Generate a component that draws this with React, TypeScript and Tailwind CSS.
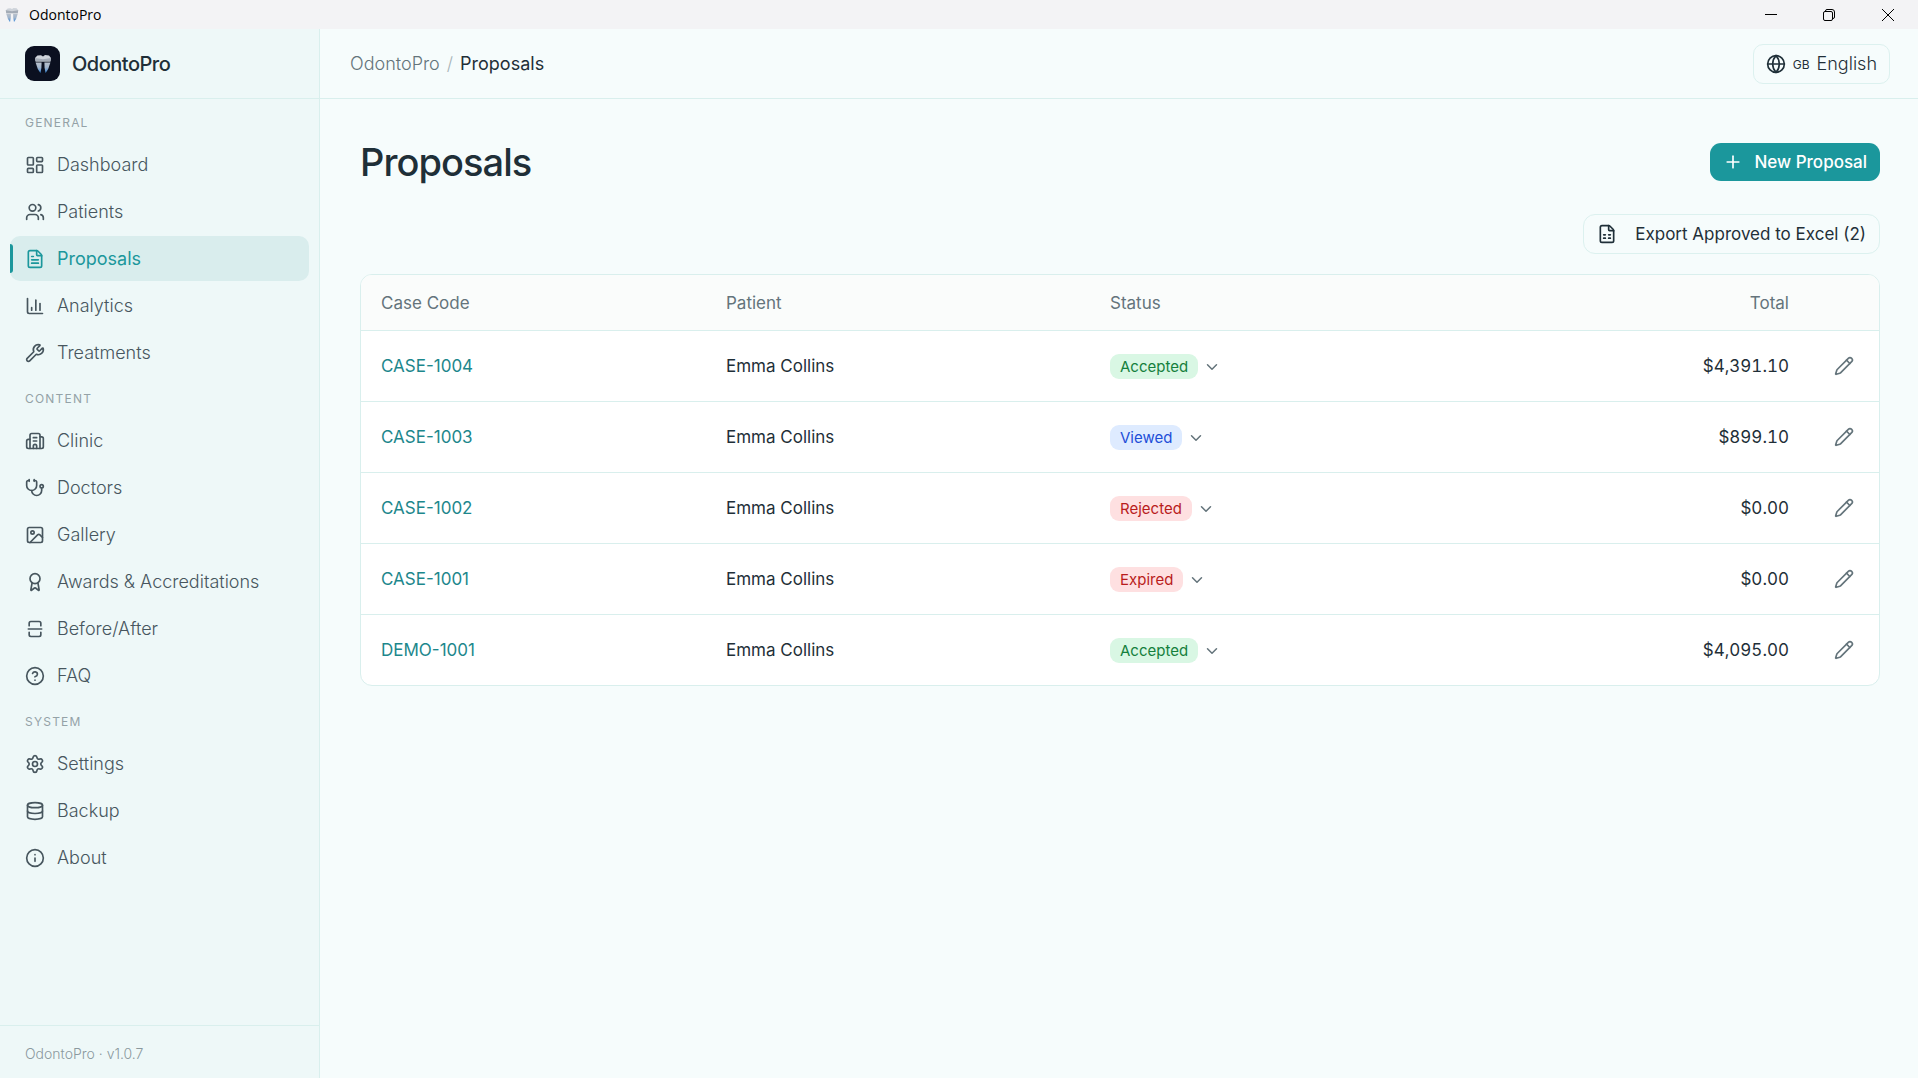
import type { ReactNode } from 'react';
import {
  Award,
  Building2,
  ChartColumn,
  ChevronDown,
  CircleHelp,
  Database,
  FileSpreadsheet,
  FileText,
  Globe,
  Image,
  Info,
  LayoutDashboard,
  Pencil,
  Plus,
  Settings,
  SquareSplitVertical,
  Stethoscope,
  Users,
  Wrench,
} from 'lucide-react';
import type { LucideIcon } from 'lucide-react';

type Status = 'Accepted' | 'Viewed' | 'Rejected' | 'Expired';

interface Proposal {
  code: string;
  patient: string;
  status: Status;
  total: string;
}

interface NavGroup {
  title: string;
  items: { label: string; icon: LucideIcon }[];
}

const navGroups: NavGroup[] = [
  {
    title: 'General',
    items: [
      { label: 'Dashboard', icon: LayoutDashboard },
      { label: 'Patients', icon: Users },
      { label: 'Proposals', icon: FileText },
      { label: 'Analytics', icon: ChartColumn },
      { label: 'Treatments', icon: Wrench },
    ],
  },
  {
    title: 'Content',
    items: [
      { label: 'Clinic', icon: Building2 },
      { label: 'Doctors', icon: Stethoscope },
      { label: 'Gallery', icon: Image },
      { label: 'Awards & Accreditations', icon: Award },
      { label: 'Before/After', icon: SquareSplitVertical },
      { label: 'FAQ', icon: CircleHelp },
    ],
  },
  {
    title: 'System',
    items: [
      { label: 'Settings', icon: Settings },
      { label: 'Backup', icon: Database },
      { label: 'About', icon: Info },
    ],
  },
];

const proposals: Proposal[] = [
  { code: 'CASE-1004', patient: 'Emma Collins', status: 'Accepted', total: '$4,391.10' },
  { code: 'CASE-1003', patient: 'Emma Collins', status: 'Viewed', total: '$899.10' },
  { code: 'CASE-1002', patient: 'Emma Collins', status: 'Rejected', total: '$0.00' },
  { code: 'CASE-1001', patient: 'Emma Collins', status: 'Expired', total: '$0.00' },
  { code: 'DEMO-1001', patient: 'Emma Collins', status: 'Accepted', total: '$4,095.00' },
];

const statusStyles: Record<Status, string> = {
  Accepted: 'bg-[#d9f7e4] text-[#15803d]',
  Viewed: 'bg-[#deebff] text-[#1d4ed8]',
  Rejected: 'bg-[#fee0e1] text-[#b91c1c]',
  Expired: 'bg-[#fee0e1] text-[#b91c1c]',
};

function ToothLogo({ className }: { className?: string }) {
  return (
    <svg viewBox="0 0 18 18" className={className} aria-hidden="true">
      <defs>
        <linearGradient id="tooth-root" x1="0" y1="0" x2="0" y2="1">
          <stop offset="0" stopColor="#b9c1cc" />
          <stop offset="0.5" stopColor="#9fb3cb" />
          <stop offset="1" stopColor="#2f83d8" />
        </linearGradient>
      </defs>
      <path d="M1 3 3.4 0.6 7 0.2 9 1.4 11 0 15 0.4 17 3 16.4 6.6H1.6Z" fill="#ced3da" />
      <path d="M1 3 9 4.2 17 3 16.4 6.6H1.6Z" fill="#a3abb6" />
      <path d="M1.6 7.4H7.6L7.4 13 6.4 18 3.8 14Z" fill="url(#tooth-root)" />
      <path d="M10.4 7.4h6L14.200 14 11.6 18 10.6 13Z" fill="url(#tooth-root)" />
    </svg>
  );
}

function TitleBar() {
  return (
    <div className="flex h-[29px] shrink-0 items-center justify-between bg-[#f3f3f5] text-black">
      <div className="flex items-center gap-[10px] pl-[5px]">
        <ToothLogo className="size-[14px]" />
        <span className="font-['Open_Sans',sans-serif] text-[14px]">OdontoPro</span>
      </div>
      <div className="flex items-center">
        <button aria-label="Minimize" className="flex h-[29px] w-[58px] items-center justify-center">
          <svg width="12" height="12" viewBox="0 0 12 12" stroke="currentColor" fill="none">
            <path d="M0 5.5h12" />
          </svg>
        </button>
        <button aria-label="Restore" className="flex h-[29px] w-[58px] items-center justify-center">
          <svg width="12" height="12" viewBox="0 0 12 12" stroke="currentColor" fill="none">
            <rect x="0.5" y="2.5" width="9" height="9" rx="1.5" />
            <path d="M2.5 2.5V2A1.5 1.5 0 0 1 4 0.5h5A2.5 2.5 0 0 1 11.5 3v5A1.5 1.5 0 0 1 10 9.5h-.5" />
          </svg>
        </button>
        <button aria-label="Close" className="flex h-[29px] w-[60px] items-center justify-center">
          <svg width="12" height="12" viewBox="0 0 12 12" stroke="currentColor" fill="none">
            <path d="M0 0l12 12M12 0 0 12" />
          </svg>
        </button>
      </div>
    </div>
  );
}

function NavItem({ label, icon: Icon, active }: { label: string; icon: LucideIcon; active: boolean }) {
  return (
    <a
      href="#"
      aria-current={active ? 'page' : undefined}
      className={`relative flex h-[45px] items-center gap-3 rounded-[10px] px-[15px] text-[18px] ${
        active ? 'bg-[#d9eded] text-[#1b979c]' : 'font-light text-[#47565e]'
      }`}
    >
      {active && <span className="absolute inset-y-2 left-0 w-[3px] rounded-r-sm bg-[#1b979c]" />}
      <Icon className="size-5" strokeWidth={2} />
      {label}
    </a>
  );
}

function Sidebar() {
  return (
    <aside className="flex w-80 shrink-0 flex-col border-r border-[#d9efed] bg-[#eef8f8]">
      <div className="flex h-[70px] items-center gap-3 border-b border-[#d9efed] px-[25px]">
        <span className="flex size-[35px] items-center justify-center rounded-[9px] bg-[#0b1020]">
          <ToothLogo className="size-[18px]" />
        </span>
        <span className="text-[20px] font-medium tracking-tight text-[#1f2f38]">OdontoPro</span>
      </div>
      <nav className="flex-1 px-[10px]">
        {navGroups.map((group) => (
          <div key={group.title}>
            <h2 className="px-[15px] pt-[14px] pb-[9px] text-[12px] leading-5 tracking-widest text-[#94a2a7] uppercase">
              {group.title}
            </h2>
            <div className="flex flex-col gap-[2px]">
              {group.items.map((item) => (
                <NavItem key={item.label} {...item} active={item.label === 'Proposals'} />
              ))}
            </div>
          </div>
        ))}
      </nav>
      <div className="border-t border-[#d9efed] px-[25px] pt-[18px] pb-[14px] text-[14px] leading-5 font-light text-[#8b999e]">
        OdontoPro · v1.0.7
      </div>
    </aside>
  );
}

function Header() {
  return (
    <header className="flex h-[70px] shrink-0 items-center justify-between border-b border-[#d9efed] pr-7 pl-[30px]">
      <nav aria-label="Breadcrumb" className="flex items-center gap-[7px] text-[18px]">
        <a href="#" className="font-light text-[#64747b]">OdontoPro</a>
        <span className="font-light text-[#a9b5b9]">/</span>
        <span className="text-[#1f2f38]">Proposals</span>
      </nav>
      <button className="flex h-10 items-center gap-[7px] rounded-[10px] border border-[#dcf1ef] px-3 text-[#1f2f38]">
        <Globe className="size-5" strokeWidth={2} />
        <span className="pt-[3px] text-[12px]">GB</span>
        <span className="text-[18px] font-light">English</span>
      </button>
    </header>
  );
}

function HeadCell({ children, className = '' }: { children?: ReactNode; className?: string }) {
  return <th className={`h-[55px] px-5 pt-[2px] font-normal ${className}`}>{children}</th>;
}

function ProposalsTable() {
  return (
    <div className="overflow-hidden rounded-xl border border-[#d9efed] bg-white">
      <table className="w-full table-fixed text-[17px] text-[#1f2f38]">
        <thead>
          <tr className="border-b border-[#d9efed] bg-[#fafcfb] text-left text-[#64747b]">
            <HeadCell className="w-[345px]">Case Code</HeadCell>
            <HeadCell className="w-[384px]">Patient</HeadCell>
            <HeadCell>Status</HeadCell>
            <HeadCell className="text-right">Total</HeadCell>
            <HeadCell className="w-[70px]" />
          </tr>
        </thead>
        <tbody>
          {proposals.map((p) => (
            <tr key={p.code} className="border-b border-[#d9efed] last:border-b-0">
              <td className="h-[71px] px-5 pt-[2px]">
                <a href="#" className="text-[#1d878c]">{p.code}</a>
              </td>
              <td className="px-5 pt-[2px]">{p.patient}</td>
              <td className="px-5 pt-[2px]">
                <button className="flex items-center gap-[5px]">
                  <span className={`rounded-[9px] px-[10px] text-[15px] leading-[25px] ${statusStyles[p.status]}`}>
                    {p.status}
                  </span>
                  <ChevronDown className="size-[18px] text-[#64747b]" strokeWidth={2} />
                </button>
              </td>
              <td className="px-5 pt-[2px] text-right tabular-nums">{p.total}</td>
              <td>
                <button aria-label={`Edit ${p.code}`} className="mx-auto flex text-[#64747b]">
                  <Pencil className="size-5" strokeWidth={2} />
                </button>
              </td>
            </tr>
          ))}
        </tbody>
      </table>
    </div>
  );
}

function App() {
  return (
    <div className="flex h-screen flex-col bg-[#f6fcfc] font-[Inter,sans-serif]">
      <TitleBar />
      <div className="flex min-h-0 flex-1">
        <Sidebar />
        <div className="flex min-w-0 flex-1 flex-col">
          <Header />
          <main className="flex-1 px-10 pt-10 pr-[38px]">
            <div className="flex h-[46px] items-center justify-between">
              <h1 className="text-[38px] font-medium tracking-tight text-[#1f2f38]">Proposals</h1>
              <button className="flex h-[38px] items-center gap-3 rounded-[11px] bg-[#1b979c] px-[13px] text-[17px] leading-7 font-medium text-white">
                <Plus className="size-5" strokeWidth={2} />
                New Proposal
              </button>
            </div>
            <div className="mt-[29px] mb-5 flex justify-end">
              <button className="flex h-10 items-center gap-[18px] rounded-xl border border-[#dcf1ef] px-[13px] text-[17px] leading-7 text-[#1f2f38]">
                <FileSpreadsheet className="size-5" strokeWidth={2} />
                Export Approved to Excel (2)
              </button>
            </div>
            <ProposalsTable />
          </main>
        </div>
      </div>
    </div>
  );
}

export default App;
